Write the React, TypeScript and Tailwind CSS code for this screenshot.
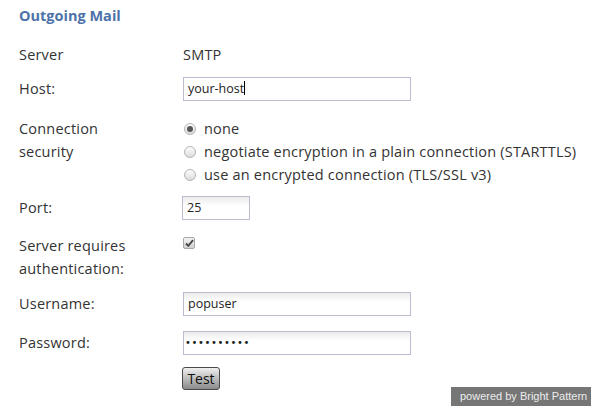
import { ReactNode } from "react"

const inputCls =
  "h-[24px] border border-[#b9bdcf] bg-gradient-to-b from-[#ebebeb] to-white to-[40%] px-[4px] text-[12.5px] tracking-normal text-[#222] leading-[22px]"

function Row({ label, children, className = "" }: { label: ReactNode; children: ReactNode; className?: string }) {
  return (
    <div className={`flex items-center ${className}`}>
      <div className="w-[163px] shrink-0">{label}</div>
      <div className="flex-1">{children}</div>
    </div>
  )
}

function Radio({ checked, label }: { checked?: boolean; label: string }) {
  return (
    <div className="flex h-[23px] items-center">
      <span className="ml-[2px] flex h-[12px] w-[12px] items-center justify-center rounded-full border border-[#b4b4b4] bg-gradient-to-b from-[#fdfdfd] to-[#dcdcdc]">
        {checked && <span className="h-[6px] w-[6px] rounded-full bg-[#555]" />}
      </span>
      <span className="ml-[8px]">{label}</span>
    </div>
  )
}

export default function App() {
  return (
    <div
      className="relative h-[406px] w-[591px] overflow-hidden bg-white pl-[19px] text-[14.5px] tracking-[0.2px] text-[#333]"
      style={{ fontFamily: '"Open Sans", "Noto Sans", sans-serif' }}
    >
      <div className="mt-[6px] h-[20px] text-[14.5px] font-bold leading-[20px] tracking-normal text-[#4d72a9]">Outgoing Mail</div>

      <Row label="Server" className="mt-[17px] h-[23px] leading-[23px]">
        <span className="ml-[1px]">SMTP</span>
      </Row>

      <Row label="Host:" className="mt-[11px] h-[24px]">
        <div className={`${inputCls} ml-[1px] w-[228px] border-[#85acdb] bg-none bg-white`}>
          your-host<span className="inline-block h-[14px] w-px translate-y-[2px] bg-black" />
        </div>
      </Row>

      <div className="mt-[16px] flex items-start leading-[23px]">
        <div className="w-[163px] shrink-0">
          Connection
          <br />
          security
        </div>
        <div>
          <Radio checked label="none" />
          <Radio label="negotiate encryption in a plain connection (STARTTLS)" />
          <Radio label="use an encrypted connection (TLS/SSL v3)" />
        </div>
      </div>

      <Row label="Port:" className="mt-[10px] h-[24px]">
        <div className={`${inputCls} w-[68px]`}>25</div>
      </Row>

      <div className="mt-[14px] flex items-start leading-[23px]">
        <div className="w-[163px] shrink-0">
          Server requires
          <br />
          authentication:
        </div>
        <div className="pt-[3px]">
          <span className="ml-[1px] flex h-[12px] w-[12px] items-center justify-center rounded-[2px] border border-[#a8a8a8] bg-gradient-to-b from-[#f4f4f4] to-[#cfcfcf]">
            <svg width="9" height="8" viewBox="0 0 9 8">
              <path d="M1 4.5 L3.3 6.8 L8 1.2" fill="none" stroke="#444" strokeWidth="1.8" />
            </svg>
          </span>
        </div>
      </div>

      <Row label="Username:" className="mt-[12px] h-[24px]">
        <div className={`${inputCls} ml-[1px] w-[228px]`}>popuser</div>
      </Row>

      <Row label="Password:" className="mt-[15px] h-[24px]">
        <div
          className={`${inputCls} ml-[1px] w-[228px] !pl-[1px] !text-[10px] !tracking-[0.6px]`}
          style={{ fontFamily: '"DejaVu Sans", sans-serif' }}
        >
          ••••••••••
        </div>
      </Row>

      <Row label="" className="mt-[12px] h-[23px]">
        <button
          className="h-[23px] w-[38px] rounded-[3px] border border-[#4a4a4a] bg-gradient-to-b from-[#f0f0f0] via-[#bdbdbd] to-[#8a8a8a] text-[14px] leading-[20px] tracking-normal text-[#111]"
          style={{ fontFamily: '"Open Sans", sans-serif' }}
        >
          Test
        </button>
      </Row>

      <div
        className="absolute bottom-0 right-0 flex h-[19px] w-[140px] items-center bg-[#767676] pl-[9px] text-[11px] tracking-normal text-[#ececec]"
        style={{ fontFamily: '"Liberation Sans", Arial, sans-serif' }}
      >
        powered by Bright Pattern
      </div>
    </div>
  )
}
